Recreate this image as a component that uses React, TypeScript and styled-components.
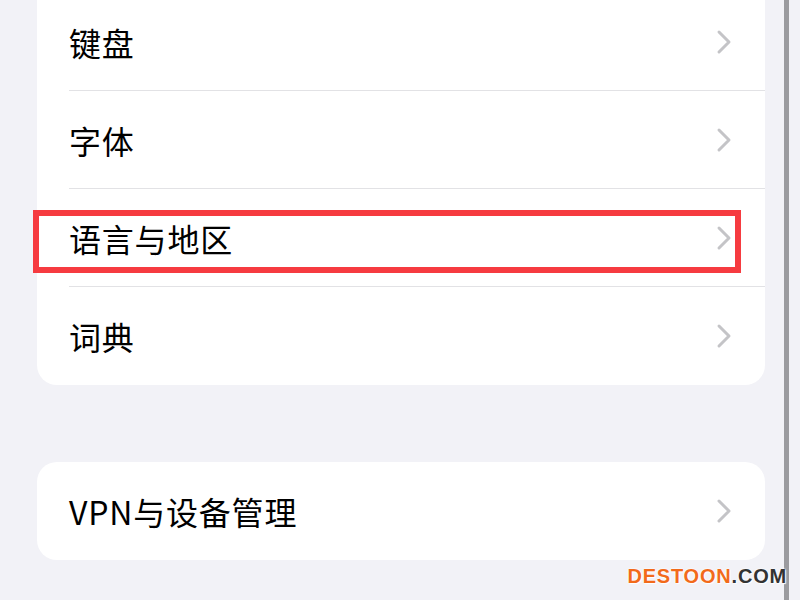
import styled, { createGlobalStyle } from "styled-components";

const GlobalStyle = createGlobalStyle`
  html, body {
    margin: 0;
    padding: 0;
    background: #f2f2f7;
    overflow: hidden;
  }
  body {
    font-family: "Noto Sans CJK SC", "Noto Sans", sans-serif;
  }
`;

interface Item {
  label: string;
  highlighted?: boolean;
}

const groups: Item[][] = [
  [
    { label: "键盘" },
    { label: "字体" },
    { label: "语言与地区", highlighted: true },
    { label: "词典" },
  ],
  [{ label: "VPN与设备管理" }],
];

function Chevron() {
  return (
    <ChevronIcon viewBox="0 0 16 26" width="16" height="26">
      <polyline
        points="3,3 13,13 3,23"
        fill="none"
        stroke="#c4c4c7"
        strokeWidth="3"
        strokeLinecap="round"
        strokeLinejoin="round"
      />
    </ChevronIcon>
  );
}

function App() {
  return (
    <>
      <GlobalStyle />
      <Screen>
        <Main>
          {groups.map((group, gi) => (
            <Card key={gi} $clipped={gi === 0}>
              {group.map((item, i) => (
                <Row
                  key={item.label}
                  $top={gi === 0 && i === 0}
                  $last={i === group.length - 1}
                >
                  <Label>{item.label}</Label>
                  <Chevron />
                  {item.highlighted && <Highlight />}
                </Row>
              ))}
            </Card>
          ))}
        </Main>
        <Track />
        <Watermark>
          <span className="brand">DESTOON</span>
          <span className="tld">.COM</span>
        </Watermark>
      </Screen>
    </>
  );
}

export default App;

const Screen = styled.div`
  position: relative;
  display: grid;
  grid-template-columns: 37px 728px 19px 5px 11px;
  grid-template-rows: 600px;
  width: 800px;
  height: 600px;
  overflow: hidden;
  background: #f2f2f7;
`;

const Main = styled.div`
  grid-column: 2;
  display: flex;
  flex-direction: column;
  gap: 77px;
`;

const Card = styled.div<{ $clipped?: boolean }>`
  background: #ffffff;
  border-radius: ${(p) => (p.$clipped ? "0 0 20px 20px" : "20px")};
  margin-top: ${(p) => (p.$clipped ? "-20px" : "0")};
`;

const Row = styled.div<{ $last?: boolean; $top?: boolean }>`
  position: relative;
  display: flex;
  align-items: center;
  justify-content: space-between;
  height: ${(p) => (p.$top ? "111px" : "98px")};
  padding-top: ${(p) => (p.$top ? "14px" : "0")};
  margin-left: 32px;
  padding-right: 33px;
  border-bottom: ${(p) => (p.$last ? "none" : "1.5px solid #e2e2e5")};
  box-sizing: border-box;
`;

const Label = styled.span`
  font-size: 32px;
  color: #000000;
  line-height: 1;
  letter-spacing: 0.8px;
`;

const ChevronIcon = styled.svg`
  display: block;
  flex-shrink: 0;
`;

const Highlight = styled.div`
  position: absolute;
  left: -36px;
  right: 24px;
  top: 21px;
  height: 63px;
  border: 6px solid #f63b40;
  box-sizing: border-box;
  pointer-events: none;
`;

const Track = styled.div`
  grid-column: 4;
  background-color: #9b9b9f;
`;

const Watermark = styled.div`
  position: absolute;
  right: 13px;
  bottom: 12px;
  font-family: "Liberation Sans", Arial, sans-serif;
  font-weight: 700;
  font-size: 20px;
  letter-spacing: 0.8px;
  white-space: nowrap;
  text-shadow: 0 0 2px #ffffff, 0 0 2px #ffffff, 1px 1px 1px #ffffff;

  .brand {
    color: #f26a1b;
  }
  .tld {
    color: #333333;
  }
`;
